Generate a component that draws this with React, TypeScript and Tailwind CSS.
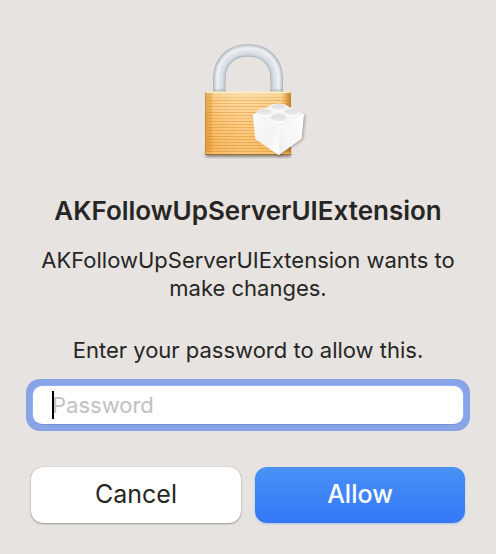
import { useState } from 'react'
import type { FormEvent } from 'react'

const APP_NAME = 'AKFollowUpServerUIExtension'

// y position, height and opacity of the brushed lines on the lock body
const GRAIN = [
  [186, 3, 0.35],
  [195, 3, 0.6],
  [204, 3, 0.5],
  [213, 3, 0.6],
  [222, 3, 0.45],
  [231, 3, 0.65],
  [240, 3, 0.6],
  [249, 3, 0.55],
  [258, 3, 0.75],
  [267, 3, 0.65],
  [276, 3, 0.75],
  [285, 3, 0.75],
  [294, 3, 0.7],
  [303, 3, 0.85],
  [312, 3, 0.75],
  [321, 3, 0.8],
  [330, 3, 0.9],
  [339, 3, 0.8],
  [348, 3, 0.7],
]

const STUDS = [
  { x: 265, y: 216, rx: 21, ry: 9 },
  { x: 223, y: 231, rx: 22, ry: 10 },
  { x: 305, y: 231, rx: 22, ry: 10 },
  { x: 266, y: 248, rx: 24, ry: 12 },
]

const SHACKLE = 'M88 171V132C88 80 122 46 174 46S260 80 260 132V171'

function LockIcon() {
  return (
    <svg viewBox="-18 0 384 384" className="h-32 w-32" aria-hidden="true">
      <defs>
        <linearGradient id="body" x1="0" y1="0" x2="0" y2="1">
          <stop offset="0" stopColor="#fbdca4" />
          <stop offset="0.2" stopColor="#fbd596" />
          <stop offset="0.55" stopColor="#fac87c" />
          <stop offset="1" stopColor="#f5bb66" />
        </linearGradient>
        <linearGradient id="bodySides" x1="0" y1="0" x2="1" y2="0">
          <stop offset="0" stopColor="#b56a12" stopOpacity="0.75" />
          <stop offset="0.02" stopColor="#d98a29" stopOpacity="0.55" />
          <stop offset="0.07" stopColor="#e0912c" stopOpacity="0.5" />
          <stop offset="0.1" stopColor="#e79a35" stopOpacity="0.15" />
          <stop offset="0.45" stopColor="#fff0cc" stopOpacity="0.12" />
          <stop offset="0.88" stopColor="#f0b052" stopOpacity="0.1" />
          <stop offset="0.94" stopColor="#d98a29" stopOpacity="0.6" />
          <stop offset="1" stopColor="#b56a12" stopOpacity="0.8" />
        </linearGradient>
        <linearGradient id="brickLeft" x1="0" y1="0" x2="1" y2="1">
          <stop offset="0" stopColor="#fafafa" />
          <stop offset="0.6" stopColor="#f3f3f3" />
          <stop offset="1" stopColor="#ffffff" />
        </linearGradient>
        <linearGradient id="brickRight" x1="0" y1="1" x2="1" y2="0">
          <stop offset="0" stopColor="#ebebec" />
          <stop offset="0.4" stopColor="#f6f6f6" />
          <stop offset="1" stopColor="#fdfdfd" />
        </linearGradient>
        <linearGradient id="stud" x1="0" y1="0" x2="0" y2="1">
          <stop offset="0" stopColor="#dcdcde" />
          <stop offset="1" stopColor="#ececed" />
        </linearGradient>
        <filter id="blur" x="-30%" y="-30%" width="160%" height="160%">
          <feGaussianBlur stdDeviation="4" />
        </filter>
        <filter id="shine" filterUnits="userSpaceOnUse" x="50" y="10" width="250" height="180">
          <feGaussianBlur stdDeviation="3" />
        </filter>
      </defs>

      <rect x="47" y="349" width="255" height="16" rx="3" fill="#3f3a34" opacity="0.6" filter="url(#blur)" />

      <g fill="none">
        <path d={SHACKLE} stroke="#a3abb6" strokeWidth="37" />
        <path d={SHACKLE} stroke="#c0c6ce" strokeWidth="33" />
        <path d={SHACKLE} stroke="#dde2e7" strokeWidth="23" filter="url(#shine)" />
        <path d="M82 171V130C82 76 120 40 174 40S266 76 266 130V171" stroke="#fafbfc" strokeWidth="7" opacity="0.8" filter="url(#shine)" />
      </g>
      <path d="M70 163H106V171H70ZM242 163H278V171H242Z" fill="#747b86" opacity="0.25" />

      <rect x="45" y="170" width="258" height="190" rx="3" fill="url(#body)" />
      {GRAIN.map(([y, height, opacity]) => (
        <rect key={y} x="46" y={y} width="256" height={height} fill="#e59b3c" opacity={opacity} />
      ))}
      <rect x="45" y="170" width="258" height="190" rx="3" fill="url(#bodySides)" />
      <rect x="47" y="170" width="254" height="4" fill="#fff0ce" />
      <rect x="46" y="353" width="256" height="3" fill="#f9d38f" opacity="0.8" />
      <rect x="46" y="357" width="256" height="3" fill="#a86a22" />

      <path d="M189 240L265 365L338 313L345 240Z" fill="#554126" opacity="0.5" filter="url(#blur)" />
      <path d="M188 238L249 208H282L342 238L266 277Z" fill="#f6f6f6" />
      <path d="M188 238L266 276V361L196 312Z" fill="url(#brickLeft)" />
      <path d="M342 238L266 276V361L335 311Z" fill="url(#brickRight)" />
      <path d="M189 239L266 277L341 239" fill="none" stroke="#ffffff" strokeWidth="3" />
      <path d="M266 278V359" stroke="#ffffff" strokeWidth="3" />
      {STUDS.map(({ x, y, rx, ry }) => (
        <g key={`${x}-${y}`}>
          <path
            d={`M${x - rx} ${y}V${y + 8}A${rx} ${ry} 0 0 0 ${x + rx} ${y + 8}V${y}Z`}
            fill="#fdfdfd"
            stroke="#d6d6d8"
            strokeWidth="1"
          />
          <ellipse cx={x} cy={y} rx={rx} ry={ry} fill="url(#stud)" stroke="#f6f6f6" strokeWidth="2" />
        </g>
      ))}
    </svg>
  )
}

export default function App() {
  const [password, setPassword] = useState('')

  const handleSubmit = (e: FormEvent) => {
    e.preventDefault()
  }

  return (
    <main className="flex min-h-screen flex-col items-center bg-[#e6e3e0] px-[26px] pt-[35px] pb-[31px] font-['Inter',sans-serif] text-[#262624]">
      <LockIcon />

      <h1 className="mt-8 text-center text-[26px] leading-8 font-semibold">{APP_NAME}</h1>
      <p className="mt-[19px] text-center text-[22px] leading-7">{`${APP_NAME} wants to make changes.`}</p>

      <form onSubmit={handleSubmit} className="mt-[34px] flex w-full flex-col">
        <label htmlFor="password" className="text-center text-[22px] leading-7">
          Enter your password to allow this.
        </label>

        <div className="relative mt-[15px] rounded-[14px] bg-[#88a3e6] p-1.5">
          <input
            id="password"
            type="password"
            placeholder="Password"
            value={password}
            onChange={(e) => setPassword(e.target.value)}
            className="block h-10 w-full rounded-[10px] border border-[#8fb0f5] border-b-[#7390d6] bg-white pr-4 pl-[19px] text-[22px] caret-black outline-none placeholder:text-[#c1c1c1]"
          />
          {!password && <span className="absolute top-3 left-[26px] h-7 w-0.5 bg-black" />}
        </div>

        <div className="mt-9 grid grid-cols-2 gap-3.5 px-[5px]">
          <button
            type="button"
            className="h-14 rounded-xl bg-white text-[25px] shadow-[0_0_1px_rgba(0,0,0,0.35),0_1px_2px_rgba(0,0,0,0.3)]"
          >
            Cancel
          </button>
          <button
            type="submit"
            className="h-14 rounded-xl bg-linear-to-b from-[#4a90f7] to-[#3478f6] text-[25px] font-medium text-white shadow-[0_1px_2px_rgba(52,120,246,0.35)]"
          >
            Allow
          </button>
        </div>
      </form>
    </main>
  )
}
